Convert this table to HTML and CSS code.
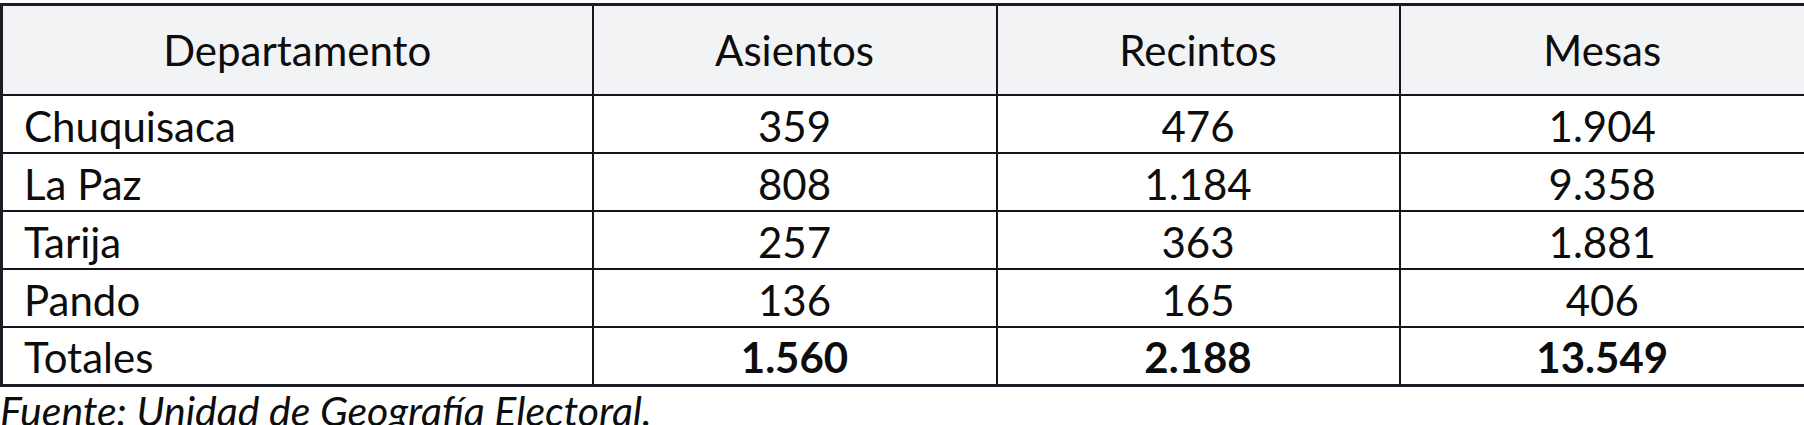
FILE: index.html
```html
<!DOCTYPE html>
<html lang="es">
<head>
<meta charset="utf-8">
<link rel="stylesheet" href="styles.css">
</head>
<body>
<div class="wrap">
<table class="data">
<colgroup>
<col class="c1"><col class="c2"><col class="c3"><col class="c4">
</colgroup>
<thead>
<tr class="head"><th>Departamento</th><th>Asientos</th><th>Recintos</th><th>Mesas</th></tr>
</thead>
<tbody>
<tr><td class="name">Chuquisaca</td><td>359</td><td>476</td><td>1.904</td></tr>
<tr><td class="name">La Paz</td><td>808</td><td>1.184</td><td>9.358</td></tr>
<tr><td class="name">Tarija</td><td>257</td><td>363</td><td>1.881</td></tr>
<tr><td class="name">Pando</td><td>136</td><td>165</td><td>406</td></tr>
<tr class="total"><td class="name">Totales</td><td>1.560</td><td>2.188</td><td>13.549</td></tr>
</tbody>
</table>
<p class="source">Fuente: Unidad de Geografía Electoral.</p>
</div>
</body>
</html>
```
FILE: styles.css
```css
html, body {
  margin: 0;
  padding: 0;
  background: #ffffff;
}
body {
  font-family: Lato, "Liberation Sans", sans-serif;
  color: #0d0d0d;
  overflow: hidden;
}
.wrap {
  padding-top: 3px;
}
.data {
  width: 1804px;
  border-collapse: collapse;
  table-layout: fixed;
  border: 3px solid #1c1c24;
}
.c1 { width: 591px; }
.c2 { width: 404px; }
.c3 { width: 403px; }
.c4 { width: 406px; }
.data th, .data td {
  border: 2px solid #15151c;
  padding: 0;
  font-size: 42px;
  text-align: center;
  line-height: 1;
}
.data th {
  font-weight: 400;
  background: #f2f3f5;
  height: 88px;
}
.data td {
  height: 58px;
  padding-top: 3px;
  box-sizing: border-box;
}
.data td.name {
  text-align: left;
  padding-left: 21px;
}
.total td {
  font-weight: 700;
}
.total td.name {
  font-weight: 400;
}
.source {
  margin: 3px 0 0 0;
  font-size: 41px;
  font-style: italic;
  line-height: 1;
}
```
